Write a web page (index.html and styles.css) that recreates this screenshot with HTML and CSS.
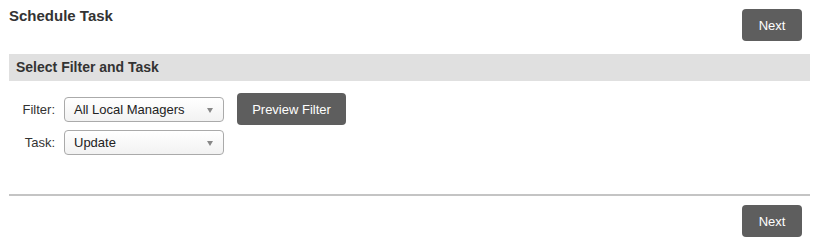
FILE: index.html
```html
<!DOCTYPE html>
<html lang="en">
<head>
    <meta charset="UTF-8">
    <title>Schedule Task</title>
    <link rel="stylesheet" href="styles.css">
</head>
<body>
<div class="page">
    <div class="page-header">
        <h1 class="page-title">Schedule Task</h1>
        <button class="btn btn--next" type="button">Next</button>
    </div>

    <div class="section-bar">Select Filter and Task</div>

    <div class="form">
        <div class="form-row">
            <label class="form-label">Filter:</label>
            <div class="select">
                <span class="select-text">All Local Managers</span>
                <span class="select-arrow"></span>
            </div>
            <button class="btn btn--preview" type="button">Preview Filter</button>
        </div>
        <div class="form-row">
            <label class="form-label">Task:</label>
            <div class="select">
                <span class="select-text">Update</span>
                <span class="select-arrow"></span>
            </div>
        </div>
    </div>

    <hr class="divider">

    <div class="page-footer">
        <button class="btn btn--next" type="button">Next</button>
    </div>
</div>
</body>
</html>
```

FILE: styles.css
```css
body {
    margin: 0;
    background: #ffffff;
    font-family: "Liberation Sans", Arial, sans-serif;
    color: #333333;
}

.page {
    padding: 0 9px;
}

.page-header {
    display: flex;
    justify-content: space-between;
    align-items: flex-start;
    padding-top: 9px;
    height: 54px;
    box-sizing: border-box;
}

.page-title {
    margin: -2px 0 0 0;
    font-size: 15px;
    font-weight: bold;
    line-height: 18px;
    color: #333333;
}

.btn {
    border: none;
    border-radius: 4px;
    background-color: #5e5e5e;
    color: #ffffff;
    font-family: "Liberation Sans", Arial, sans-serif;
    font-size: 13px;
    cursor: pointer;
    padding: 0;
}

.btn--next {
    width: 60px;
    height: 32px;
    margin-right: 8px;
}

/* 分组标题 */
.section-bar {
    height: 27px;
    line-height: 27px;
    padding-left: 7px;
    background-color: #e0e0e0;
    font-size: 14px;
    font-weight: bold;
    color: #333333;
}

.form {
    padding-top: 12px;
    height: 113px;
    box-sizing: border-box;
}

.form-row {
    display: flex;
    align-items: center;
    height: 32px;
}

.form-row + .form-row {
    margin-top: 1px;
}

.form-label {
    width: 46px;
    text-align: right;
    font-size: 13px;
    color: #333333;
    margin-right: 9px;
}

/* 模拟下拉框 */
.select {
    position: relative;
    width: 160px;
    height: 25px;
    box-sizing: border-box;
    border: 1px solid #aaaaaa;
    border-radius: 4px;
    background: linear-gradient(#ffffff, #f2f2f2);
    display: flex;
    align-items: center;
    padding-left: 9px;
    font-size: 13px;
    color: #222222;
}

.select-arrow {
    position: absolute;
    right: 10px;
    top: 10px;
    width: 0;
    height: 0;
    border-left: 3.5px solid transparent;
    border-right: 3.5px solid transparent;
    border-top: 5px solid #888888;
}

.btn--preview {
    width: 109px;
    height: 32px;
    margin-left: 13px;
}

.divider {
    margin: 0;
    border: none;
    height: 2px;
    background-color: #c4c4c4;
}

.page-footer {
    display: flex;
    justify-content: flex-end;
    padding-top: 9px;
}
```
